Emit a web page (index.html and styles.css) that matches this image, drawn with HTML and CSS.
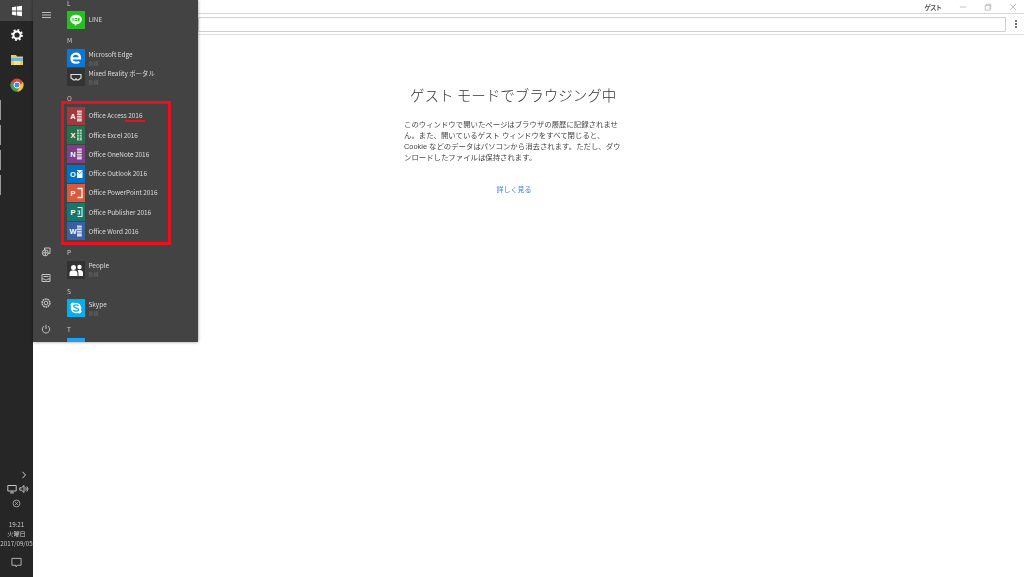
FILE: index.html
```html
<!DOCTYPE html>
<html lang="ja">
<head>
<meta charset="utf-8">
<title>ゲスト モード</title>
<link rel="stylesheet" href="styles.css">
</head>
<body>
<div class="browser">
  <div class="titlebar">
    <span class="guest">ゲスト</span>
    <svg class="winbtn" viewBox="0 0 10 10"><path d="M1 5h8" /></svg>
    <svg class="winbtn" viewBox="0 0 10 10"><path d="M1.500 3h6v6h-6zM3 3V1.500h5.500V7H7.500" /></svg>
    <svg class="winbtn" viewBox="0 0 10 10"><path d="M1.500 1.500l7 7M8.500 1.500l-7 7" /></svg>
  </div>
  <div class="toolbar">
    <div class="omnibox"></div>
    <div class="dots"><i></i><i></i><i></i></div>
  </div>
  <main class="page">
    <div class="guest-text">
      <h1>ゲスト モードでブラウジング中</h1>
      <p>このウィンドウで開いたページはブラウザの履歴に記録されませ<br>ん。また、開いているゲスト ウィンドウをすべて閉じると、<br>Cookie などのデータはパソコンから消去されます。ただし、ダウ<br>ンロードしたファイルは保持されます。</p>
      <a href="#">詳しく見る</a>
    </div>
  </main>
</div>

<aside class="taskbar">
  <div class="tb-start">
    <svg class="i12" viewBox="0 0 12 12"><path fill="#fff" d="M1 2.200l4.300-.6v4H1zM6 1.500l5-.7v4.800H6zM1 6.400h4.300v4L1 9.800zM6 6.400h5v4.800l-5-.7z"/></svg>
  </div>
  <div class="tb-apps">
    <svg class="i14" viewBox="0 0 14 14"><circle cx="7" cy="7" r="3.600" fill="none" stroke="#fff" stroke-width="2"/><circle cx="7" cy="7" r="5" fill="none" stroke="#fff" stroke-width="1.800" stroke-dasharray="1.900 2"/></svg>
    <svg class="i14" viewBox="0 0 14 14"><path fill="#f2c94f" d="M1 2h5l1 1.500h6V12H1z"/><path fill="#6fb4dc" d="M1 5h12v3H1z"/><path fill="#f7e08a" d="M4 8h6v4H4z"/></svg>
    <svg class="i14" viewBox="0 0 14 14"><circle cx="7" cy="7" r="6.500" fill="#d9493b"/><path fill="#f6c430" d="M12.700 3.800A6.500 6.500 0 0 1 7 13.500l2.500-5z"/><path fill="#3aa757" d="M1.300 3.800A6.500 6.500 0 0 0 7 13.500l2.500-5-4.500-1z"/><circle cx="7" cy="7" r="3" fill="#4587f3" stroke="#fff"/></svg>
  </div>
  <div class="tb-edge"><i></i><i></i><i></i><i></i></div>
  <div class="tb-tray">
    <svg class="chev" viewBox="0 0 6 8"><path d="M1.500 .8L4.500 4 1.500 7.200"/></svg>
    <div class="tray-row">
      <svg class="i10" viewBox="0 0 10 10"><path d="M.8 1.500h8.400v5.500H.8zM5 7v1.500M3 8.900h4"/></svg>
      <svg class="i10" viewBox="0 0 10 10"><path d="M.8 3.800h1.700L5 1.500v7L2.500 6.200H.8zM6.500 3.500a2 2 0 0 1 0 3M7.800 2.500a3.500 3.500 0 0 1 0 5"/></svg>
    </div>
    <svg class="i9 tray-circle" viewBox="0 0 10 10"><circle cx="5" cy="5" r="3.800"/><path d="M3.500 3.500l3 3M6.500 3.500l-3 3"/></svg>
    <div class="clock"><span>19:21</span><span>火曜日</span><span>2017/09/05</span></div>
    <svg class="notify" viewBox="0 0 12 12"><path d="M1 1.500h10v7.500H7L5.500 10.800V9H1z"/></svg>
  </div>
</aside>

<nav class="start">
  <div class="rail">
    <svg class="burger" viewBox="0 0 9 6"><path d="M0 .5h9M0 3h9M0 5.500h9"/></svg>
    <div class="rail-bottom">
      <svg class="i10" viewBox="0 0 10 10"><path d="M3.500 3V1h5.500v5.500H7.500"/><circle cx="4.300" cy="5.800" r="3"/><path d="M1.500 5.800h5.600M4.300 2.800v6"/></svg>
      <svg class="i10" viewBox="0 0 10 10"><path d="M1 1.500h8v7H1zM1 6h2.500l.8 1h1.400l.8-1H9M2.500 3.500h5"/></svg>
      <svg class="i10" viewBox="0 0 10 10"><circle cx="5" cy="5" r="1.800"/><circle class="cog" cx="5" cy="5" r="3.900"/></svg>
      <svg class="i10" viewBox="0 0 10 10"><path d="M3 2.200a3.700 3.700 0 1 0 4 0M5 .8V5"/></svg>
    </div>
  </div>
  <div class="applist">
    <div class="letter first">L</div>
    <div class="app">
      <svg class="tile" viewBox="0 0 18 18"><rect width="18" height="18" fill="#25c01f"/><ellipse cx="9" cy="8.500" rx="5.800" ry="4.800" fill="#fff"/><path fill="#fff" d="M7.500 12.500h3L8 15z"/><path fill="#25c01f" d="M5.500 7h1v3h-1zM7.500 7h3v.9h-3zM7.500 9.100h3v.9h-3zM11 7h1.500v3H11z"/></svg>
      <div class="label"><span>LINE</span></div>
    </div>
    <div class="letter">M</div>
    <div class="app">
      <svg class="tile" viewBox="0 0 18 18"><rect width="18" height="18" fill="#0b78d8"/><path fill="none" stroke="#fff" stroke-width="2.200" d="M4.500 9.400h8.500c0-3-1.800-4.700-4.100-4.700-2.600 0-4.400 2-4.400 4.600 0 2.800 2 4.400 4.500 4.400 1.300 0 2.500-.3 3.300-.9"/></svg>
      <div class="label"><span>Microsoft Edge</span><small>新規</small></div>
    </div>
    <div class="app">
      <svg class="tile" viewBox="0 0 18 18"><rect width="18" height="18" fill="#333"/><path fill="none" stroke="#ddd" stroke-width="1.200" d="M4 6.500h10v3.500l-2.500 1.800H9.800L9 10.800l-.8 1H6.500L4 10z"/></svg>
      <div class="label"><span>Mixed Reality ポータル</span><small>新規</small></div>
    </div>
    <div class="letter">O</div>
    <div class="app">
      <svg class="tile" viewBox="0 0 18 18"><rect width="18" height="18" fill="#a03a40"/><rect x="10" y="3.500" width="4.800" height="11" fill="#e8c9ca"/><path stroke="#a03a40" stroke-width=".7" d="M10 6h5M10 8.500h5M10 11h5"/><text class="tile-letter" x="6" y="11.800">A</text></svg>
      <div class="label"><span>Office Access 2016</span></div>
    </div>
    <div class="app">
      <svg class="tile" viewBox="0 0 18 18"><rect width="18" height="18" fill="#2b6e4d"/><rect x="10" y="3.500" width="4.800" height="11" fill="#a9d3bc"/><path stroke="#2b6e4d" stroke-width=".7" d="M10 6h5M10 8.500h5M10 11h5M12.400 3.500v11"/><text class="tile-letter" x="6" y="11.800">X</text></svg>
      <div class="label"><span>Office Excel 2016</span></div>
    </div>
    <div class="app">
      <svg class="tile" viewBox="0 0 18 18"><rect width="18" height="18" fill="#7d3f85"/><rect x="10" y="3.500" width="4.800" height="11" fill="#e0c8de"/><path stroke="#7d3f85" stroke-width=".7" d="M10 6h5M10 8.500h5M10 11h5"/><text class="tile-letter" x="6" y="11.800">N</text></svg>
      <div class="label"><span>Office OneNote 2016</span></div>
    </div>
    <div class="app">
      <svg class="tile" viewBox="0 0 18 18"><rect width="18" height="18" fill="#0072c6"/><rect x="10" y="5" width="5.500" height="8" fill="#fff"/><path fill="none" stroke="#0072c6" stroke-width=".8" d="M10 6l2.700 2.500L15.500 6"/><text class="tile-letter" x="6" y="11.800">O</text></svg>
      <div class="label"><span>Office Outlook 2016</span></div>
    </div>
    <div class="app">
      <svg class="tile" viewBox="0 0 18 18"><rect width="18" height="18" fill="#d9593c"/><path fill="none" stroke="#fff" stroke-width="1.300" d="M10.500 4.500h4.500v9h-4.500"/><text class="tile-letter" x="6" y="11.800">P</text></svg>
      <div class="label"><span>Office PowerPoint 2016</span></div>
    </div>
    <div class="app">
      <svg class="tile" viewBox="0 0 18 18"><rect width="18" height="18" fill="#17776a"/><path fill="none" stroke="#d5ece8" stroke-width="1.200" d="M10.500 4.500h4.500v9h-4.500M10.500 8h2v3h-2"/><text class="tile-letter" x="6" y="11.800">P</text></svg>
      <div class="label"><span>Office Publisher 2016</span></div>
    </div>
    <div class="app">
      <svg class="tile" viewBox="0 0 18 18"><rect width="18" height="18" fill="#3960a5"/><rect x="10" y="3.500" width="4.800" height="11" fill="#d2dceb"/><path stroke="#3960a5" stroke-width=".7" d="M10 6h5M10 8.500h5M10 11h5"/><text class="tile-letter" x="6" y="11.800">W</text></svg>
      <div class="label"><span>Office Word 2016</span></div>
    </div>
    <div class="letter">P</div>
    <div class="app">
      <svg class="tile" viewBox="0 0 18 18"><rect width="18" height="18" fill="#333"/><circle cx="6.500" cy="6.500" r="2.500" fill="#fff"/><circle cx="12.500" cy="6" r="2.200" fill="#fff"/><path fill="#fff" d="M2.500 15v-2.500c0-2 1.500-3.200 4-3.200s4 1.200 4 3.200V15zM11.500 15v-3c0-1-.4-2-1-2.700.6-.3 1.300-.4 2-.4 2.200 0 3.500 1.200 3.500 3V15z"/></svg>
      <div class="label"><span>People</span><small>新規</small></div>
    </div>
    <div class="letter">S</div>
    <div class="app">
      <svg class="tile" viewBox="0 0 18 18"><rect width="18" height="18" fill="#00aff0"/><circle cx="9" cy="9" r="5.300" fill="#fff"/><circle cx="5.800" cy="5.800" r="2.300" fill="#fff"/><circle cx="12.200" cy="12.200" r="2.300" fill="#fff"/><path fill="none" stroke="#00aff0" stroke-width="1.300" d="M11.500 7c-.6-.9-1.500-1.200-2.500-1.200-1.300 0-2.300.6-2.300 1.500 0 2.100 4.800 1.200 4.800 3.300 0 1-1 1.600-2.400 1.600-1.200 0-2.100-.4-2.700-1.300"/></svg>
      <div class="label"><span>Skype</span><small>新規</small></div>
    </div>
    <div class="letter">T</div>
    <div class="app">
      <svg class="tile" viewBox="0 0 18 18"><rect width="18" height="18" fill="#1da1f2"/></svg>
    </div>
  </div>
  <div class="highlight"></div>
  <div class="underline"></div>
</nav>
</body>
</html>
```
FILE: styles.css
```css
* { box-sizing: border-box; }
html, body { margin: 0; height: 100%; }
body {
  position: relative;
  width: 1024px;
  height: 577px;
  overflow: hidden;
  background: #fff;
  font-family: "Noto Sans CJK JP", "Liberation Sans", sans-serif;
}
.browser, .taskbar, .start { filter: blur(.3px); }

/* browser window */
.browser { display: flex; flex-direction: column; height: 100%; }
.titlebar {
  display: flex;
  align-items: center;
  justify-content: flex-end;
  height: 14px;
  border-bottom: 1px solid #d8d8d8;
}
.guest { margin-right: 9px; font-size: 6.500px; font-weight: 700; color: #555; letter-spacing: -1px; }
.winbtn { width: 8px; height: 8px; margin: 0 8.500px; fill: none; stroke: #b4b4b4; stroke-width: 1; }
.winbtn:last-child { margin-right: 7.500px; }
.toolbar {
  display: flex;
  align-items: center;
  height: 21px;
  padding: 0 6px 0 198px;
  background: #fff;
  border-bottom: 1px solid #ddd;
}
.omnibox { flex: 1; height: 15px; border: 1px solid #cfcfcf; border-radius: 1px; }
.dots { display: flex; flex-direction: column; gap: 1px; width: 12px; align-items: flex-end; padding-right: 1px; }
.dots i { width: 2px; height: 2px; background: #777; }
.page { flex: 1; display: flex; justify-content: center; padding-top: 50px; }
.guest-text { width: 216px; color: #333; }
.guest-text h1 {
  margin: 0 0 0 6px;
  font-size: 14.500px;
  line-height: 20px;
  font-weight: 300;
  white-space: nowrap;
  color: #333;
}
.guest-text p {
  margin: 15px 0 0;
  font-family: "Liberation Sans", "Noto Sans CJK JP", sans-serif;
  font-size: 7.400px;
  line-height: 10.900px;
  white-space: nowrap;
  color: #444;
}
.guest-text a {
  display: block;
  margin: 20px 0 0 4px;
  text-align: center;
  font-size: 7px;
  line-height: 11px;
  color: #4a80e8;
  text-decoration: none;
}

/* taskbar */
.taskbar {
  position: absolute;
  left: 0; top: 0;
  display: flex;
  flex-direction: column;
  width: 33px;
  height: 100%;
  background: #262626;
  color: #ddd;
}
.tb-start { display: flex; align-items: center; justify-content: center; height: 21px; background: #444; }
.tb-apps { display: flex; flex-direction: column; align-items: center; gap: 11px; padding-top: 6.500px; }
.tb-edge { position: absolute; left: 0; top: 100px; display: flex; flex-direction: column; gap: 5px; width: 1px; }
.tb-edge i { display: block; height: 20px; background: #999; }
.tb-tray { margin-top: auto; display: flex; flex-direction: column; align-items: center; padding-bottom: 9px; }
.i12 { width: 12px; height: 12px; }
.i14 { width: 14px; height: 14px; }
.i10 { width: 10px; height: 10px; fill: none; stroke: #c4c4c4; stroke-width: 1; }
.i9 { width: 9px; height: 9px; fill: none; stroke: #aaa; stroke-width: 1; }
.cog { stroke-width: 1.500; stroke-dasharray: 1.800 .6; }
.chev { width: 6px; height: 8px; margin-left: 15px; fill: none; stroke: #ccc; stroke-width: 1; }
.tray-row { display: flex; gap: 2px; margin: 5px 0 0 3px; }
.tray-circle { margin-top: 5px; }
.clock {
  display: flex;
  flex-direction: column;
  align-items: center;
  margin-top: 12px;
  font-size: 6.200px;
  line-height: 9.500px;
  color: #ccc;
  white-space: nowrap;
}
.notify { width: 11px; height: 11px; margin-top: 9px; fill: none; stroke: #ccc; stroke-width: .9; }

/* start menu */
.start {
  position: absolute;
  left: 33px; top: 0;
  display: flex;
  width: 165px;
  height: 342px;
  overflow: hidden;
  background: #434343;
  box-shadow: 0 0 3px rgba(0,0,0,.45);
}
.rail { display: flex; flex-direction: column; align-items: center; width: 26px; padding: 12px 0 0; }
.burger { width: 9px; height: 6px; fill: none; stroke: #ccc; stroke-width: .9; }
.rail-bottom { display: flex; flex-direction: column; gap: 15.700px; margin-top: 229px; }
.applist { flex: 1; padding-left: 8px; color: #eee; }
.letter {
  height: 19.250px;
  padding-top: 6px;
  font-size: 6.500px;
  line-height: 10px;
  color: #ccc;
}
.letter.first { height: 10px; padding-top: 0; line-height: 7px; }
.app { display: flex; align-items: center; gap: 3.500px; height: 19.250px; }
.tile { flex: none; width: 18px; height: 18px; }
.tile-letter { font-size: 7.500px; font-weight: 700; fill: #fff; text-anchor: middle; font-family: "Liberation Sans", sans-serif; }
.label { display: flex; flex-direction: column; padding-top: 1px; font-size: 6.400px; line-height: 8px; color: #dedede; white-space: nowrap; }
.label small { margin-bottom: 1px; font-size: 5px; line-height: 7px; color: #6e6e6e; }
.highlight {
  position: absolute;
  left: 28px; top: 101px;
  width: 110px; height: 144px;
  border: 3px solid #e8111f;
}
.underline {
  position: absolute;
  left: 92px; top: 120px;
  width: 20px; height: 2px;
  background: #e8111f;
}
```
